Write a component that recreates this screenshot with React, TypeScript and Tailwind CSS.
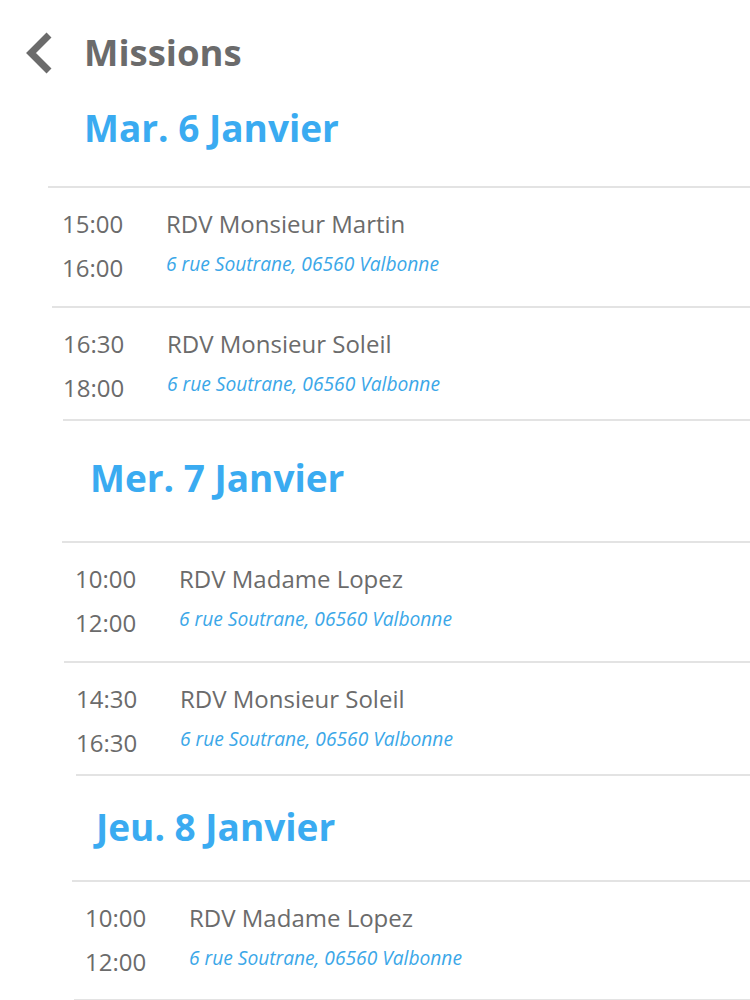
import React from "react";

type Row = {
  start: string;
  end: string;
  title: string;
  address: string;
  lineCls: string;
  padCls: string;
  heightCls: string;
};

type Day = {
  label: string;
  lineCls: string;
  labelCls: string;
  heightCls: string;
  centerCls: string;
  rows: Row[];
};

const address = "6 rue Soutrane, 06560 Valbonne";

const days: Day[] = [
  {
    label: "Mar. 6 Janvier",
    lineCls: "",
    labelCls: "",
    heightCls: "",
    centerCls: "",
    rows: [
      {
        start: "15:00",
        end: "16:00",
        title: "RDV Monsieur Martin",
        address,
        lineCls: "ml-[48px]",
        padCls: "pl-[14px]",
        heightCls: "h-[120px]",
      },
      {
        start: "16:30",
        end: "18:00",
        title: "RDV Monsieur Soleil",
        address,
        lineCls: "ml-[52px]",
        padCls: "pl-[11px]",
        heightCls: "h-[113px]",
      },
    ],
  },
  {
    label: "Mer. 7 Janvier",
    lineCls: "ml-[63px]",
    labelCls: "pl-[27px]",
    heightCls: "h-[122px]",
    centerCls: "pt-[34px]",
    rows: [
      {
        start: "10:00",
        end: "12:00",
        title: "RDV Madame Lopez",
        address,
        lineCls: "ml-[62px]",
        padCls: "pl-[13px]",
        heightCls: "h-[120px]",
      },
      {
        start: "14:30",
        end: "16:30",
        title: "RDV Monsieur Soleil",
        address,
        lineCls: "ml-[64px]",
        padCls: "pl-[12px]",
        heightCls: "h-[113px]",
      },
    ],
  },
  {
    label: "Jeu. 8 Janvier",
    lineCls: "ml-[76px]",
    labelCls: "pl-[20px]",
    heightCls: "h-[106px]",
    centerCls: "pt-[28px]",
    rows: [
      {
        start: "10:00",
        end: "12:00",
        title: "RDV Madame Lopez",
        address,
        lineCls: "ml-[72px]",
        padCls: "pl-[13px]",
        heightCls: "h-[119px]",
      },
    ],
  },
];

function MissionRow({ row }: { row: Row }) {
  return (
    <div className={`${row.lineCls} ${row.heightCls} border-t-2 border-[#e3e3e3]`}>
      <div className={`${row.padCls} pt-[14px] flex`}>
        <div className="w-[104px] shrink-0 text-[24px] leading-[44px] text-[#6b6b6b]">
          <div>{row.start}</div>
          <div>{row.end}</div>
        </div>
        <div className="flex flex-col">
          <span className="text-[24px] leading-[44px] text-[#6b6b6b] whitespace-nowrap">
            {row.title}
          </span>
          <span className="text-[19.2px] leading-[36px] italic text-[#3ba7e8] whitespace-nowrap">
            {row.address}
          </span>
        </div>
      </div>
    </div>
  );
}

export default function App() {
  return (
    <div
      className="w-[750px] h-[1000px] overflow-hidden bg-white"
      style={{ fontFamily: '"Open Sans", "Noto Sans", sans-serif' }}
    >
      {/* header */}
      <div className="h-[105px] flex items-center">
        <svg width="34" height="46" viewBox="0 0 34 46" className="ml-[23px]">
          <polyline
            points="26,5 8,23 26,41"
            fill="none"
            stroke="#6b6b6b"
            strokeWidth="7"
          />
        </svg>
        <h1 className="ml-[27px] text-[36.5px] leading-none font-bold text-[#6b6b6b]">
          Missions
        </h1>
      </div>

      {days.map((day, i) => (
        <section key={day.label}>
          {i === 0 ? (
            <div className="h-[81px]">
              <div className="h-[45px] flex items-center pl-[84px]">
                <h2 className="text-[37px] leading-none font-bold text-[#3aabf1]">
                  {day.label}
                </h2>
              </div>
            </div>
          ) : (
            <div className={`${day.lineCls} ${day.heightCls} border-t-2 border-[#e3e3e3]`}>
              <div className={`${day.centerCls} ${day.labelCls}`}>
                <h2 className="h-[45px] flex items-center text-[37px] leading-none font-bold text-[#3aabf1]">
                  {day.label}
                </h2>
              </div>
            </div>
          )}
          {day.rows.map((row, j) => (
            <MissionRow key={j} row={row} />
          ))}
        </section>
      ))}
      <div className="ml-[74px] border-t-2 border-[#e3e3e3]" />
    </div>
  );
}
